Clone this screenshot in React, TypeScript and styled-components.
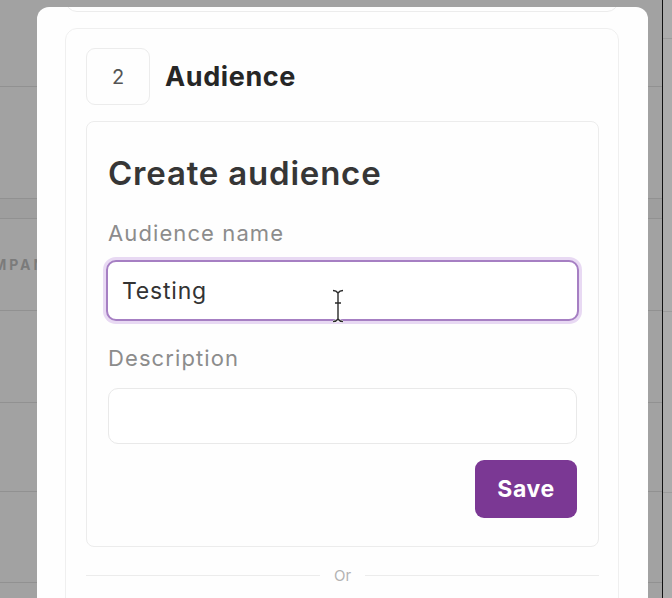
import React from "react";
import styled, { createGlobalStyle } from "styled-components";

const GlobalStyle = createGlobalStyle`
  html, body {
    margin: 0;
    padding: 0;
    background: #a2a2a2;
    overflow: hidden;
  }
  * {
    box-sizing: border-box;
  }
`;

const Page = styled.div`
  position: relative;
  width: 672px;
  height: 598px;
  overflow: hidden;
  display: flex;
  font-family: Inter, "Noto Sans", sans-serif;
`;

const BgTable = styled.div`
  width: 662px;
  display: flex;
  flex-direction: column;
  background: #a2a2a2;
`;

interface BgRowProps {
  $height: number;
  $shade?: string;
}
const BgRow = styled.div<BgRowProps>`
  height: ${(props) => props.$height}px;
  flex-shrink: 0;
  border-bottom: 1px solid #919191;
  background: ${(props) => props.$shade || "transparent"};
  display: flex;
  align-items: center;
`;

const BgCellText = styled.span`
  margin-left: -34px;
  font-family: Inter, sans-serif;
  font-size: 14px;
  font-weight: 700;
  letter-spacing: 3px;
  color: #7b7b7b;
`;

const WindowEdge = styled.div`
  width: 1px;
  background: #111;
  flex-shrink: 0;
`;

const SidePane = styled.div`
  flex: 1;
  background: #acacac;
  display: flex;
  flex-direction: column;
`;

const SideRow = styled.div<{ $height: number }>`
  height: ${(props) => props.$height}px;
  border-bottom: 1px solid #9c9c9c;
`;

const Modal = styled.div`
  position: absolute;
  left: 37px;
  top: 7px;
  width: 611px;
  height: 640px;
  background: #fefefe;
  border-radius: 12px;
  padding: 0 29px 0 28px;
  overflow: hidden;
`;

const PrevCard = styled.div`
  height: 40px;
  margin-top: -35px;
  border: 1px solid #ececec;
  border-radius: 12px;
`;

const StepCard = styled.div`
  margin-top: 16px;
  border: 1px solid #efefef;
  border-radius: 12px;
  padding: 19px 19px 0 20px;
  height: 620px;
`;

const StepHeader = styled.div`
  display: flex;
  align-items: center;
  gap: 15px;
`;

const StepNumber = styled.div`
  width: 64px;
  height: 57px;
  border: 1px solid #ececec;
  border-radius: 9px;
  display: flex;
  align-items: center;
  justify-content: center;
  font-size: 20px;
  color: #555;
`;

const StepTitle = styled.h2`
  margin: 0;
  font-size: 27px;
  font-weight: 700;
  color: #262626;
  letter-spacing: 0.6px;
`;

const FormCard = styled.div`
  margin-top: 16px;
  border: 1px solid #ececec;
  border-radius: 8px;
  padding: 31px 21px 28px 21px;
  display: flex;
  flex-direction: column;
`;

const FormTitle = styled.h3`
  margin: 0;
  font-size: 33px;
  line-height: 40px;
  font-weight: 600;
  color: #363636;
  letter-spacing: 0.8px;
`;

interface LabelProps {
  $top: number;
}
const Label = styled.label<LabelProps>`
  margin-top: ${(props) => props.$top}px;
  font-size: 22px;
  line-height: 26px;
  color: #8c8c8c;
  letter-spacing: 1.1px;
`;

interface InputBoxProps {
  $focused?: boolean;
  $top: number;
}
const InputBox = styled.div<InputBoxProps>`
  position: relative;
  margin-top: ${(props) => props.$top}px;
  height: ${(props) => (props.$focused ? 61 : 56)}px;
  margin-left: ${(props) => (props.$focused ? -2 : 0)}px;
  margin-right: ${(props) => (props.$focused ? -2 : 0)}px;
  border: ${(props) => (props.$focused ? "2px solid #a67fc3" : "1px solid #e9e9e9")};
  box-shadow: ${(props) => (props.$focused ? "0 0 0 3px #e8d9f3" : "none")};
  border-radius: 10px;
  background: #fff;
  display: flex;
  align-items: center;
  padding-left: 14px;
  font-size: 23px;
  letter-spacing: 0.8px;
  color: #333;
`;

const Cursor = styled.svg`
  position: absolute;
  left: 224px;
  top: 27px;
`;

const Actions = styled.div`
  margin-top: 16px;
  display: flex;
  justify-content: flex-end;
`;

const SaveButton = styled.button`
  width: 102px;
  height: 58px;
  border: none;
  border-radius: 9px;
  background: #7b3894;
  color: #fff;
  font-family: Inter, sans-serif;
  font-size: 23px;
  font-weight: 700;
  letter-spacing: 0.6px;
`;

const Divider = styled.div`
  margin-top: 19px;
  display: flex;
  align-items: center;
  gap: 14px;
  font-size: 15px;
  color: #b3b3b3;
  &::before,
  &::after {
    content: "";
    flex: 1;
    height: 1px;
    background: #ececec;
  }
`;

const bgRows = [
  { h: 87 },
  { h: 112 },
  { h: 20, shade: "#9e9e9e" },
  { h: 92, text: "COMPANY" },
  { h: 92 },
  { h: 89 },
  { h: 91 },
];

const cursorPath =
  "M1 1.5 C4 1.5 5 2.5 6 4 C7 2.5 8 1.5 11 1.5 M6 4 V30 M1 32.5 C4 32.5 5 31.5 6 30 C7 31.5 8 32.5 11 32.5 M3 14 H9";

export default function App() {
  return (
    <>
      <GlobalStyle />
      <Page>
        <BgTable>
          {bgRows.map((row, i) => (
            <BgRow key={i} $height={row.h} $shade={row.shade}>
              {row.text && <BgCellText>{row.text}</BgCellText>}
            </BgRow>
          ))}
        </BgTable>
        <WindowEdge />
        <SidePane>
          <SideRow $height={39} />
          <SideRow $height={273} />
          <SideRow $height={181} />
        </SidePane>

        <Modal>
          <PrevCard />
          <StepCard>
            <StepHeader>
              <StepNumber>2</StepNumber>
              <StepTitle>Audience</StepTitle>
            </StepHeader>
            <FormCard>
              <FormTitle>Create audience</FormTitle>
              <Label $top={27}>Audience name</Label>
              <InputBox $focused $top={14}>
                Testing
                <Cursor width="12" height="34" viewBox="0 0 12 34">
                  <path d={cursorPath} fill="none" stroke="#fff" strokeWidth="3" />
                  <path d={cursorPath} fill="none" stroke="#2a2a2a" strokeWidth="1.4" />
                </Cursor>
              </InputBox>
              <Label $top={24}>Description</Label>
              <InputBox $top={17} />
              <Actions>
                <SaveButton>Save</SaveButton>
              </Actions>
            </FormCard>
            <Divider>Or</Divider>
          </StepCard>
        </Modal>
      </Page>
    </>
  );
}
